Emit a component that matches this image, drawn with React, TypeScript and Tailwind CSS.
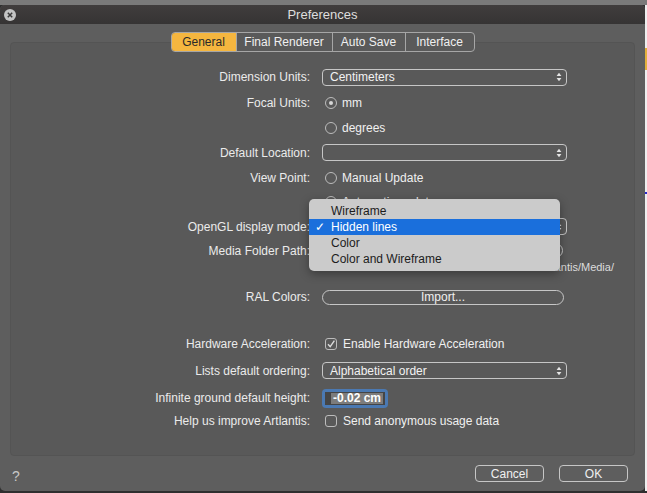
import React from 'react';

const label = 'w-[299px] shrink-0 text-right text-[12px] text-[#ebebeb]';

function Arrows() {
  return (
    <svg width="6" height="10" viewBox="0 0 6 10" className="shrink-0">
      <path d="M3 0.8 L5.4 3.9 H0.6 Z" fill="#e4e4e4" />
      <path d="M3 9.2 L5.4 6.1 H0.6 Z" fill="#e4e4e4" />
    </svg>
  );
}

function Select({ value }: { value?: string }) {
  return (
    <div className="flex h-[17px] w-[245px] items-center justify-between rounded-[4px] border border-[#c6c6c6] pl-[7px] pr-[4px] text-[12px] text-[#f2f2f2]">
      <span>{value}</span>
      <Arrows />
    </div>
  );
}

function Radio({ checked, text }: { checked?: boolean; text: string }) {
  return (
    <div className="ml-[3px] flex items-center gap-[5px] text-[12px] text-[#f0f0f0]">
      <span className="flex h-[12px] w-[12px] items-center justify-center rounded-full border border-[#bcbcbc]">
        {checked && <span className="h-[4px] w-[4px] rounded-full bg-[#d6d6d6]" />}
      </span>
      <span>{text}</span>
    </div>
  );
}

function Checkbox({ checked, text }: { checked?: boolean; text: string }) {
  return (
    <div className="ml-[3px] flex items-center gap-[6px] text-[12px] text-[#f0f0f0]">
      <span className="flex h-[12px] w-[12px] items-center justify-center rounded-[3px] border border-[#bcbcbc]">
        {checked && (
          <svg width="10" height="10" viewBox="0 0 10 10">
            <path d="M2 5.2 L4.2 7.6 L8.4 1.6" stroke="#dcdcdc" strokeWidth="1.4" fill="none" />
          </svg>
        )}
      </span>
      <span>{text}</span>
    </div>
  );
}

function Row({ name, h, children }: { name?: string; h: string; children?: React.ReactNode }) {
  return (
    <div className={`flex items-center gap-[12px] ${h}`}>
      <div className={label}>{name}</div>
      {children}
    </div>
  );
}

const tabs = [
  { name: 'General', w: 'w-[64px]', active: true },
  { name: 'Final Renderer', w: 'w-[96px]' },
  { name: 'Auto Save', w: 'w-[73px]' },
  { name: 'Interface', w: 'w-[69px]' },
];

const menuItems = ['Wireframe', 'Hidden lines', 'Color', 'Color and Wireframe'];

export default function App() {
  return (
    <div className="relative flex h-[493px] w-[647px] flex-col overflow-hidden bg-[#2f2f2f] font-['Liberation_Sans',Arial,sans-serif]">
      <div className="h-[5px] shrink-0 bg-[#7a7a7a]" />
      <div className="flex">
        {/* Preferences window */}
        <div className="flex h-[486px] w-[645px] flex-col overflow-hidden rounded-[5px] bg-[#5e5e5e]">
          <div className="relative flex h-[19px] shrink-0 items-center justify-center bg-gradient-to-b from-[#403d3d] to-[#363434] text-[13px] text-[#dedede]">
            <span className="absolute left-[4px] top-[4px] flex h-[12px] w-[12px] items-center justify-center rounded-full bg-[#c4c4c4]">
              <svg width="6" height="6" viewBox="0 0 6 6">
                <path d="M0.8 0.8 L5.2 5.2 M5.2 0.8 L0.8 5.2" stroke="#3a3a3a" strokeWidth="1.5" />
              </svg>
            </span>
            Preferences
          </div>

          <div className="flex flex-col pt-[8px]">
            <div className="relative z-10 flex justify-center">
              <div className="flex h-[20px] overflow-hidden rounded-[4px] border border-[#a6a6a6] bg-[#5a5a5a] text-[12px]">
                {tabs.map((t, i) => (
                  <div
                    key={t.name}
                    className={`flex items-center justify-center ${t.w} ${i > 0 ? 'border-l border-[#a6a6a6]' : ''} ${
                      t.active ? 'bg-[#f5b63f] text-[#2a2a2a]' : 'text-[#f0f0f0]'
                    }`}
                  >
                    {t.name}
                  </div>
                ))}
              </div>
            </div>

            <div className="-mt-[10px] ml-[10px] h-[414px] w-[625px] rounded-[4px] border border-[#545454] bg-[#595959] pt-[21px]">
              <Row name="Dimension Units:" h="h-[26px]">
                <Select value="Centimeters" />
              </Row>
              <Row name="Focal Units:" h="h-[25px]">
                <Radio checked text="mm" />
              </Row>
              <Row h="h-[25px]">
                <Radio text="degrees" />
              </Row>
              <Row name="Default Location:" h="h-[25px]">
                <Select />
              </Row>
              <Row name="View Point:" h="h-[25px]">
                <Radio text="Manual Update" />
              </Row>
              <Row h="h-[24px]">
                <Radio text="Automatic update" />
              </Row>
              <Row name="OpenGL display mode:" h="h-[25px]">
                <Select value="Hidden lines" />
              </Row>
              <Row name="Media Folder Path:" h="h-[23px]">
                <div className="flex h-[15px] w-[241px] items-center justify-center rounded-full border border-[#c6c6c6] text-[12px] text-[#f0f0f0]">
                  Choose...
                </div>
              </Row>
              <Row h="h-[10px]">
                <div className="flex w-[292px] justify-end whitespace-nowrap text-[11px] leading-[10px] text-[#dcdcdc]">
                  /Users/Shared/Abvent 2020/Abvent/Artlantis/Media/
                </div>
              </Row>
              <Row name="RAL Colors:" h="h-[50px]">
                <div className="flex h-[15px] w-[242px] items-center justify-center rounded-full border border-[#c6c6c6] text-[12px] text-[#f0f0f0]">
                  Import...
                </div>
              </Row>
              <div className="h-[9px]" />
              <Row name="Hardware Acceleration:" h="h-[26px]">
                <Checkbox checked text="Enable Hardware Acceleration" />
              </Row>
              <Row name="Lists default ordering:" h="h-[27px]">
                <Select value="Alphabetical order" />
              </Row>
              <Row name="Infinite ground default height:" h="h-[28px]">
                <div className="flex h-[19px] w-[66px] rounded-[4px] bg-[#4b79b2] p-[3px]">
                  <div className="flex flex-1 items-center bg-[#454545] pl-[6px]">
                    <span className="flex h-[11px] items-center bg-[#7c7c7c] px-[2px] text-[12px] font-bold text-white">
                      -0.02 cm
                    </span>
                  </div>
                </div>
              </Row>
              <Row name="Help us improve Artlantis:" h="h-[18px]">
                <Checkbox text="Send anonymous usage data" />
              </Row>
            </div>

            <div className="mt-[9px] flex h-[17px] items-center">
              <span className="ml-[12px] mt-[5px] text-[14px] text-[#c8c8c8]">?</span>
              <div className="ml-auto flex h-[17px] w-[69px] items-center justify-center rounded-[4px] border border-[#c6c6c6] text-[12px] text-[#f0f0f0]">
                Cancel
              </div>
              <div className="ml-[15px] mr-[17px] flex h-[17px] w-[69px] items-center justify-center rounded-[4px] border border-[#c6c6c6] text-[12px] text-[#f0f0f0]">
                OK
              </div>
            </div>
          </div>
        </div>

        {/* background app peeking at the right */}
        <div className="flex w-[2px] flex-col bg-[#eeeeee]">
          <div className="h-[43px]" />
          <div className="h-[22px] bg-[#e2b03c]" />
          <div className="h-[122px]" />
          <div className="h-[2px] bg-[#2a2ad0]" />
        </div>
      </div>

      {/* OpenGL popup menu */}
      <div className="absolute left-[309px] top-[199px] w-[251px] rounded-[5px] bg-[#cbcbcb] py-[4px] text-[12px] text-[#1c1c1c] shadow-[0_3px_10px_rgba(0,0,0,0.35)]">
        {menuItems.map((m) => (
          <div
            key={m}
            className={`relative flex h-[16px] items-center pl-[22px] ${
              m === 'Hidden lines' ? 'bg-[#1a6fdc] text-white' : ''
            }`}
          >
            {m === 'Hidden lines' && <span className="absolute left-[6px] text-[12px]">✓</span>}
            {m}
          </div>
        ))}
      </div>
    </div>
  );
}
